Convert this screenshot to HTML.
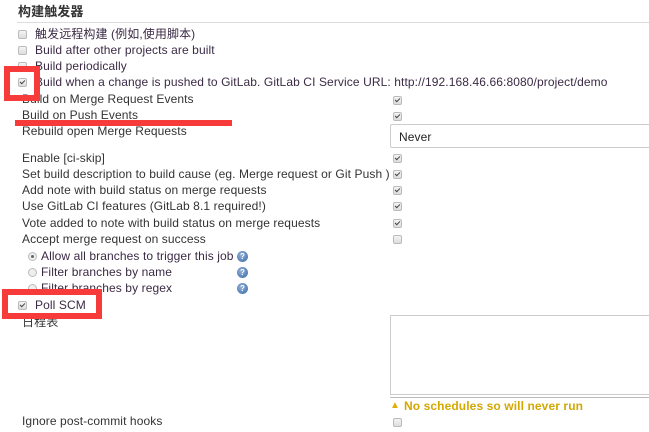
<!DOCTYPE html>
<html><head><meta charset="utf-8"><style>
body{margin:0;width:649px;height:432px;background:#fff;position:relative;overflow:hidden;font-family:"Liberation Sans","Noto Sans CJK SC",sans-serif;font-size:12px;color:#333;letter-spacing:0.1px}
.t{position:absolute;white-space:nowrap;line-height:14px}
.p{color:#3b2a45}
.cb{position:absolute;width:7px;height:7px;border:1px solid #bbb;border-radius:2px;background:linear-gradient(#f4f4f4,#ddd)}
.ck::after{content:"";position:absolute;left:1px;top:1px;width:4px;height:2px;border-left:1.5px solid #444;border-bottom:1.5px solid #444;transform:rotate(-45deg)}
.rd{position:absolute;width:7px;height:7px;border:1px solid #bbb;border-radius:50%;background:#eee}
.rd.on::after{content:"";position:absolute;left:2px;top:2px;width:3px;height:3px;border-radius:50%;background:#666}
.h{position:absolute;width:11px;height:11px;border-radius:50%;background:radial-gradient(circle at 40% 35%,#8fb0d8,#3c6aa5);color:#fff;font-size:8px;font-weight:bold;text-align:center;line-height:11px;letter-spacing:0}
.red{position:absolute;border:6px solid #f73a3a;box-sizing:border-box}
</style></head><body>
<div class="t" style="left:18px;top:5px;font-weight:bold;font-size:13px;color:#333">构建触发器</div>
<div style="position:absolute;left:17px;top:22px;width:632px;height:1px;background:#ddd"></div>

<div class="cb" style="left:18px;top:30px"></div><div class="t p" style="left:35px;top:27px">触发远程构建 (例如,使用脚本)</div>
<div class="cb" style="left:18px;top:46px"></div><div class="t p" style="left:35px;top:43px">Build after other projects are built</div>
<div class="cb" style="left:18px;top:62px"></div><div class="t p" style="left:35px;top:59px">Build periodically</div>
<div class="cb ck" style="left:18px;top:78px"></div><div class="t p" style="left:35px;top:75px">Build when a change is pushed to GitLab. GitLab CI Service URL: http://192.168.46.66:8080/project/demo</div>

<div class="t" style="left:22px;top:92px">Build on Merge Request Events</div>
<div class="t" style="left:22px;top:108px">Build on Push Events</div>
<div class="t" style="left:22px;top:124px">Rebuild open Merge Requests</div>
<div class="cb ck" style="left:393px;top:96px"></div>
<div class="cb ck" style="left:393px;top:112px"></div>
<div style="position:absolute;left:390px;top:124px;width:270px;height:24px;border:1px solid #ccc;border-radius:2px;box-sizing:border-box"></div>
<div class="t" style="left:399px;top:130px;color:#222">Never</div>

<div class="t" style="left:22px;top:151px">Enable [ci-skip]</div>
<div class="t" style="left:22px;top:167px">Set build description to build cause (eg. Merge request or Git Push )</div>
<div class="t" style="left:22px;top:183px">Add note with build status on merge requests</div>
<div class="t" style="left:22px;top:199px">Use GitLab CI features (GitLab 8.1 required!)</div>
<div class="t" style="left:22px;top:216px">Vote added to note with build status on merge requests</div>
<div class="t" style="left:22px;top:232px">Accept merge request on success</div>
<div class="cb ck" style="left:393px;top:154px"></div>
<div class="cb ck" style="left:393px;top:170px"></div>
<div class="cb ck" style="left:393px;top:186px"></div>
<div class="cb ck" style="left:393px;top:202px"></div>
<div class="cb ck" style="left:393px;top:219px"></div>
<div class="cb" style="left:393px;top:235px"></div>

<div class="rd on" style="left:28px;top:252px"></div><div class="t p" style="left:41px;top:249px">Allow all branches to trigger this job</div><div class="h" style="left:237px;top:251px">?</div>
<div class="rd" style="left:28px;top:268px"></div><div class="t p" style="left:41px;top:265px">Filter branches by name</div><div class="h" style="left:237px;top:267px">?</div>
<div class="rd" style="left:28px;top:284px"></div><div class="t p" style="left:41px;top:281px">Filter branches by regex</div><div class="h" style="left:237px;top:283px">?</div>

<div class="cb ck" style="left:18px;top:301px"></div><div class="t p" style="left:35px;top:298px">Poll SCM</div>
<div class="t" style="left:22px;top:315px">日程表</div>
<div style="position:absolute;left:390px;top:315px;width:270px;height:80px;border:1px solid #ccc;box-sizing:border-box"></div>
<div style="position:absolute;left:390px;top:397px;width:260px;height:1px;background:#bbb"></div>
<div class="t" style="left:390px;top:399px;color:#e0b000;font-size:10px">▲</div>
<div class="t" style="left:404px;top:399px;color:#d4a800;font-weight:bold">No schedules so will never run</div>
<div class="t" style="left:22px;top:414px">Ignore post-commit hooks</div>
<div class="cb" style="left:393px;top:418px"></div>

<div class="red" style="left:4px;top:66px;width:36px;height:35px"></div>
<div style="position:absolute;left:15px;top:120px;width:217px;height:6px;background:#f73a3a"></div>
<div class="red" style="left:2px;top:289px;width:100px;height:30px"></div>
</body></html>
